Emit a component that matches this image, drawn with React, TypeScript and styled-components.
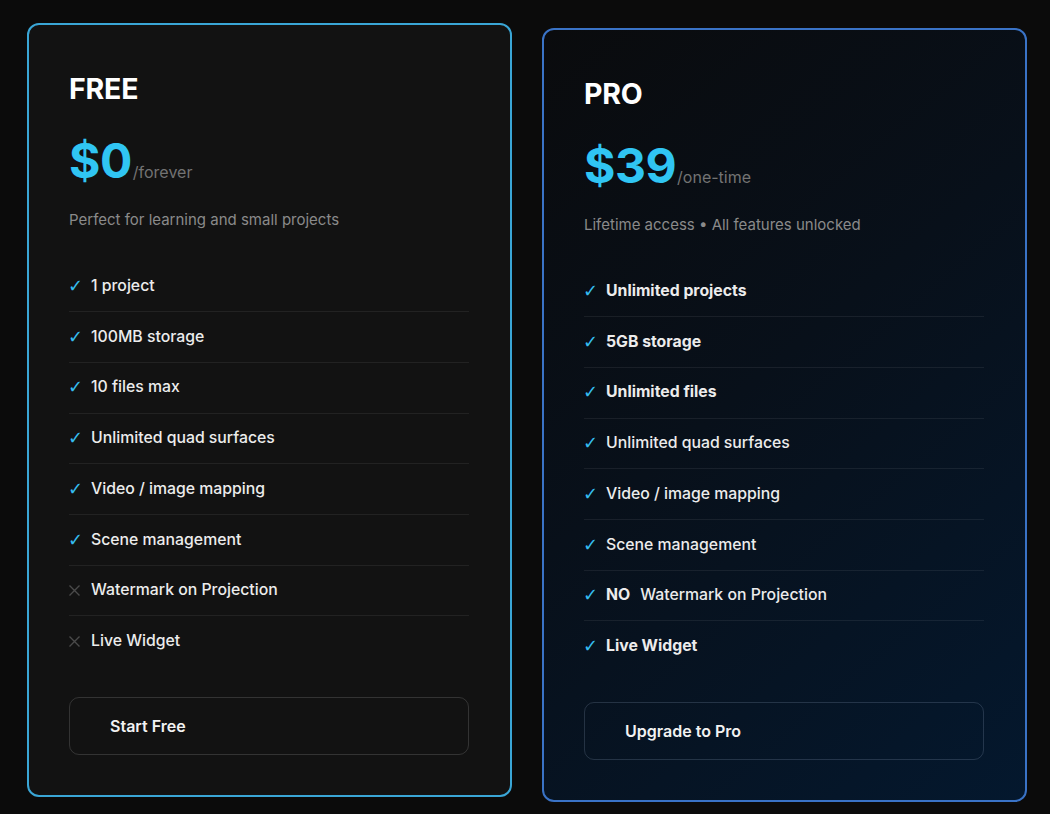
import React from "react";
import styled, { createGlobalStyle } from "styled-components";

const Global = createGlobalStyle`
  * { box-sizing: border-box; }
  html, body { margin: 0; padding: 0; background: #0b0b0b; }
  body { font-family: Inter, "Noto Sans", "Liberation Sans", sans-serif; color: #fff; }
`;

const Page = styled.div`
  display: grid;
  grid-template-columns: 485px 485px;
  column-gap: 30px;
  align-items: start;
  padding: 23px 0 0 27px;
  min-height: 814px;
  background: #0b0b0b;
`;

const Card = styled.div<{ $pro?: boolean }>`
  display: flex;
  flex-direction: column;
  width: 485px;
  padding: 47px 41px 40px 40px;
  border-radius: 12px;
  border: 2px solid ${(p) => (p.$pro ? "#3a73c6" : "#3aa6d6")};
  background: ${(p) =>
    p.$pro
      ? "linear-gradient(140deg, #0a0b0d 0%, #08101a 45%, #04182e 100%)"
      : "#121212"};
  margin-top: ${(p) => (p.$pro ? "5px" : "0")};
`;

const Title = styled.h2`
  margin: 0;
  font-size: 28.5px;
  line-height: 34px;
  font-weight: 700;
  color: #fff;
  letter-spacing: -0.2px;
`;

const PriceRow = styled.div`
  display: flex;
  align-items: baseline;
  margin-top: 31px;
`;

const Amount = styled.span`
  font-size: 48px;
  line-height: 48px;
  font-weight: 700;
  color: #30c5f3;
  letter-spacing: -0.5px;
`;

const Per = styled.span`
  font-size: 16px;
  color: #737373;
  margin-left: 1px;
`;

const Desc = styled.p`
  margin: 24px 0 0;
  font-size: 15px;
  line-height: 22.5px;
  color: #8a8a8a;
`;

const List = styled.ul`
  list-style: none;
  margin: 30px 0 0;
  padding: 0;
`;

const Item = styled.li<{ $bold?: boolean }>`
  display: flex;
  align-items: center;
  padding: 12.5px 0;
  font-size: 15.8px;
  line-height: 24.7px;
  font-weight: ${(p) => (p.$bold ? 700 : 500)};
  color: #ececec;
  border-bottom: 1px solid rgba(255, 255, 255, 0.07);
  &:last-child { border-bottom: none; }
`;

const Mark = styled.span`
  display: inline-flex;
  align-items: center;
  width: 22px;
  flex: none;
  color: #35bdf0;
  font-family: "DejaVu Sans", sans-serif;
  font-size: 18px;
  font-weight: 700;
  margin-left: -1px;
  margin-right: 1px;
`;

const Strong = styled.strong`
  font-weight: 700;
  margin-right: 10px;
`;

const Button = styled.button<{ $pro?: boolean }>`
  margin-top: 31px;
  width: 100%;
  height: 58px;
  padding: 0 0 0 40px;
  text-align: left;
  background: transparent;
  border: 1px solid ${(p) => (p.$pro ? "rgba(160,180,210,0.2)" : "rgba(255,255,255,0.14)")};
  border-radius: 10px;
  color: #f2f2f2;
  font-family: inherit;
  font-size: 16px;
  font-weight: 600;
  cursor: pointer;
`;

const Cross = () => (
  <svg width="13" height="13" viewBox="0 0 13 13" fill="none">
    <path d="M1.5 1.5 L11.5 11.5 M11.5 1.5 L1.5 11.5" stroke="#4a4a4a" strokeWidth="1.4" />
  </svg>
);

type Feature = { text: string; ok: boolean; bold?: boolean; prefix?: string };

const freeFeatures: Feature[] = [
  { text: "1 project", ok: true },
  { text: "100MB storage", ok: true },
  { text: "10 files max", ok: true },
  { text: "Unlimited quad surfaces", ok: true },
  { text: "Video / image mapping", ok: true },
  { text: "Scene management", ok: true },
  { text: "Watermark on Projection", ok: false },
  { text: "Live Widget", ok: false },
];

const proFeatures: Feature[] = [
  { text: "Unlimited projects", ok: true, bold: true },
  { text: "5GB storage", ok: true, bold: true },
  { text: "Unlimited files", ok: true, bold: true },
  { text: "Unlimited quad surfaces", ok: true },
  { text: "Video / image mapping", ok: true },
  { text: "Scene management", ok: true },
  { text: "Watermark on Projection", ok: true, prefix: "NO" },
  { text: "Live Widget", ok: true, bold: true },
];

function Plan(props: {
  pro?: boolean;
  name: string;
  amount: string;
  per: string;
  desc: string;
  features: Feature[];
  cta: string;
}) {
  return (
    <Card $pro={props.pro}>
      <Title>{props.name}</Title>
      <PriceRow>
        <Amount>{props.amount}</Amount>
        <Per>{props.per}</Per>
      </PriceRow>
      <Desc>{props.desc}</Desc>
      <List>
        {props.features.map((f) => (
          <Item key={f.text} $bold={f.bold}>
            <Mark>{f.ok ? "✓" : <Cross />}</Mark>
            {f.prefix && <Strong>{f.prefix}</Strong>}
            {f.text}
          </Item>
        ))}
      </List>
      <Button $pro={props.pro}>{props.cta}</Button>
    </Card>
  );
}

export default function App() {
  return (
    <>
      <Global />
      <Page>
        <Plan
          name="FREE"
          amount="$0"
          per="/forever"
          desc="Perfect for learning and small projects"
          features={freeFeatures}
          cta="Start Free"
        />
        <Plan
          pro
          name="PRO"
          amount="$39"
          per="/one-time"
          desc="Lifetime access • All features unlocked"
          features={proFeatures}
          cta="Upgrade to Pro"
        />
      </Page>
    </>
  );
}
